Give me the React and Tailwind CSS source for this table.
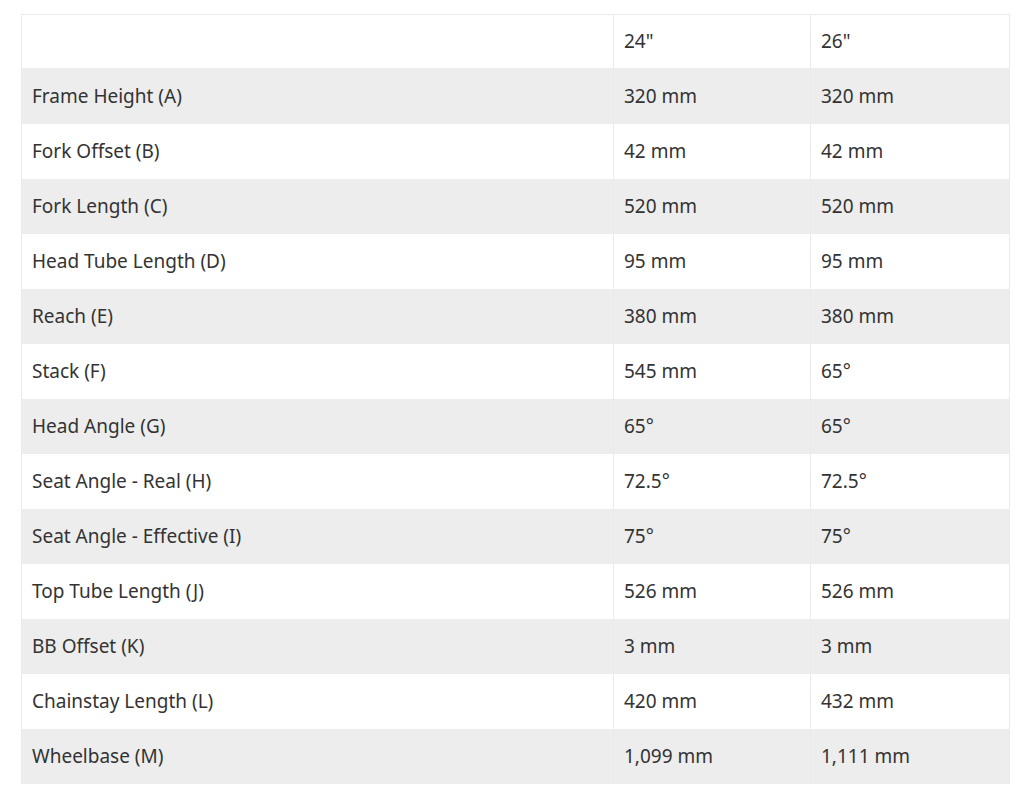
import React from 'react';

const rows = [
  ['Frame Height (A)', '320 mm', '320 mm'],
  ['Fork Offset (B)', '42 mm', '42 mm'],
  ['Fork Length (C)', '520 mm', '520 mm'],
  ['Head Tube Length (D)', '95 mm', '95 mm'],
  ['Reach (E)', '380 mm', '380 mm'],
  ['Stack (F)', '545 mm', '65°'],
  ['Head Angle (G)', '65°', '65°'],
  ['Seat Angle - Real (H)', '72.5°', '72.5°'],
  ['Seat Angle - Effective (I)', '75°', '75°'],
  ['Top Tube Length (J)', '526 mm', '526 mm'],
  ['BB Offset (K)', '3 mm', '3 mm'],
  ['Chainstay Length (L)', '420 mm', '432 mm'],
  ['Wheelbase (M)', '1,099 mm', '1,111 mm'],
];

export default function App() {
  return (
    <div className="min-h-screen bg-white pl-[21px] pt-[14px] text-[#333] text-[19px]" style={{ fontFamily: '"Noto Sans", "Open Sans", sans-serif' }}>
      <table className="w-[988px] table-fixed border-collapse">
        <colgroup>
          <col className="w-[592px]" />
          <col className="w-[197px]" />
          <col className="w-[199px]" />
        </colgroup>
        <thead>
          <tr className="h-[54px]">
            <th className="border border-[#ebebeb] px-[10px] text-left font-normal"></th>
            <th className="border border-[#ebebeb] px-[10px] text-left font-normal">24"</th>
            <th className="border border-[#ebebeb] px-[10px] text-left font-normal">26"</th>
          </tr>
        </thead>
        <tbody>
          {rows.map((r, i) => (
            <tr key={r[0]} className={`h-[55px] ${i % 2 === 0 ? 'bg-[#ededed]' : 'bg-white'}`}>
              {r.map((c, j) => (
                <td key={j} className="border-x border-[#ebebeb] px-[10px]">{c}</td>
              ))}
            </tr>
          ))}
        </tbody>
      </table>
    </div>
  );
}
